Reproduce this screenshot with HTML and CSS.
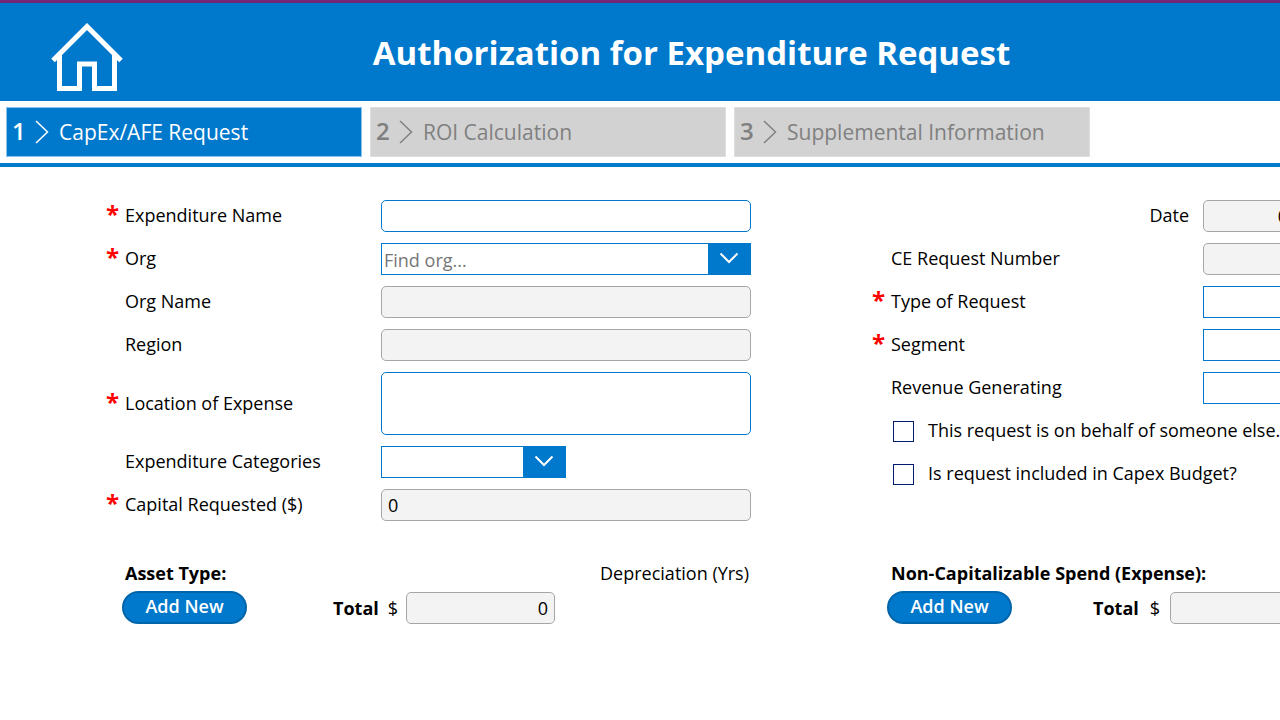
FILE: index.html
```html
<!DOCTYPE html>
<html lang="en">
<head>
<meta charset="utf-8">
<meta name="viewport" content="width=device-width, initial-scale=1">
<title>Authorization for Expenditure Request</title>
<link rel="stylesheet" href="styles.css">
</head>
<body>
<header class="banner">
  <a class="home" href="#" aria-label="Home">
    <svg width="72" height="70" viewBox="0 0 72 70" fill="none" stroke="#fff" stroke-width="5">
      <path d="M2 37.500 36 3.500 70 37.500"/>
      <path d="M8.500 31V65.500H28.500V41H43.500V65.500H63.500V31"/>
    </svg>
  </a>
  <h1 class="title">Authorization for Expenditure Request</h1>
</header>
<nav class="steps">
  <button class="step step-active" type="button" aria-current="step"><span class="step-number">1</span><svg class="step-arrow" width="14" height="24" viewBox="0 0 14 24"><path d="M1 1 12.500 12 1 23"/></svg><span>CapEx/AFE Request</span></button>
  <button class="step" type="button"><span class="step-number">2</span><svg class="step-arrow" width="14" height="24" viewBox="0 0 14 24"><path d="M1 1 12.500 12 1 23"/></svg><span>ROI Calculation</span></button>
  <button class="step" type="button"><span class="step-number">3</span><svg class="step-arrow" width="14" height="24" viewBox="0 0 14 24"><path d="M1 1 12.500 12 1 23"/></svg><span>Supplemental Information</span></button>
</nav>
<main>
<form class="form">
  <section class="fields">
    <span class="star">*</span><label class="label" for="name">Expenditure Name</label>
    <input class="input" id="name" type="text">

    <span class="star">*</span><label class="label" for="org">Org</label>
    <div class="dropdown">
      <select class="select" id="org"><option>Find org...</option></select>
      <span class="arrow"><svg width="20" height="12" viewBox="0 0 20 12"><path d="M1.500 1.500 10 10 18.500 1.500"/></svg></span>
    </div>

    <span></span><label class="label" for="org-name">Org Name</label>
    <input class="input" id="org-name" type="text" readonly>

    <span></span><label class="label" for="region">Region</label>
    <input class="input" id="region" type="text" readonly>

    <span class="star">*</span><label class="label" for="location">Location of Expense</label>
    <textarea class="input input-tall" id="location"></textarea>

    <span></span><label class="label" for="categories">Expenditure Categories</label>
    <div class="dropdown dropdown-short">
      <select class="select" id="categories"><option></option></select>
      <span class="arrow"><svg width="20" height="12" viewBox="0 0 20 12"><path d="M1.500 1.500 10 10 18.500 1.500"/></svg></span>
    </div>

    <span class="star">*</span><label class="label" for="capital">Capital Requested ($)</label>
    <input class="input" id="capital" type="text" value="0" readonly>
  </section>

  <section class="fields fields-right">
    <span></span><label class="label label-end" for="date">Date</label>
    <input class="input input-center" id="date" type="text" value="0" readonly>

    <span></span><label class="label" for="number">CE Request Number</label>
    <input class="input" id="number" type="text" readonly>

    <span class="star">*</span><label class="label" for="type">Type of Request</label>
    <div class="dropdown"><select class="select" id="type"><option></option></select></div>

    <span class="star">*</span><label class="label" for="segment">Segment</label>
    <div class="dropdown"><select class="select" id="segment"><option></option></select></div>

    <span></span><label class="label" for="revenue">Revenue Generating</label>
    <div class="dropdown"><select class="select" id="revenue"><option></option></select></div>

    <label class="check"><input class="box" type="checkbox"><span>This request is on behalf of someone else.</span></label>
    <label class="check"><input class="box" type="checkbox"><span>Is request included in Capex Budget?</span></label>
  </section>

  <section class="spend">
    <div class="spend-head"><h2 class="spend-title">Asset Type:</h2><span>Depreciation (Yrs)</span></div>
    <div class="spend-row">
      <button class="add" type="button">Add New</button>
      <label class="total" for="asset-total">Total</label>
      <span class="currency">$</span>
      <input class="input amount" id="asset-total" type="text" value="0" readonly>
    </div>
  </section>

  <section class="spend spend-right">
    <div class="spend-head"><h2 class="spend-title">Non-Capitalizable Spend (Expense):</h2></div>
    <div class="spend-row">
      <button class="add" type="button">Add New</button>
      <label class="total" for="expense-total">Total</label>
      <span class="currency">$</span>
      <input class="input amount" id="expense-total" type="text" readonly>
    </div>
  </section>
</form>
</main>
</body>
</html>
```
FILE: styles.css
```css
* { box-sizing: border-box; }

body {
  margin: 0;
  overflow-x: hidden;
  background: #fff;
  color: #000;
  font: 18px/24px "Open Sans", "Noto Sans", sans-serif;
}

button, input, select, textarea { font: inherit; color: inherit; margin: 0; }

.banner {
  display: flex;
  align-items: center;
  padding: 20px 20px 8px 51px;
  border-top: 3px solid #742774;
  background: #0078cb;
  color: #fff;
}
.home, .home svg { display: block; }
.title {
  flex: 1;
  margin: 0;
  padding-bottom: 10px;
  font-size: 33px;
  line-height: 40px;
  font-weight: 700;
  text-align: center;
}

.steps {
  display: flex;
  gap: 8px;
  padding: 6px;
  border-bottom: 4px solid #0078cb;
}
.step {
  display: flex;
  flex: 0 1 356px;
  align-items: center;
  height: 50px;
  padding: 0 6px 0 5px;
  border: 1px solid #dedede;
  background: #d2d2d2;
  color: #808080;
  font-size: 21px;
  line-height: 30px;
  white-space: nowrap;
}
.step-active { background: #0078cb; border-color: #8cc3e8; color: #fff; }
.step-number { width: 23px; padding-bottom: 2px; font-size: 24px; font-weight: 600; text-align: left; }
.step-arrow { margin-right: 10px; fill: none; stroke: currentColor; stroke-width: 1.5; }

.form {
  display: grid;
  grid-template-columns: minmax(645px, 1fr) minmax(491px, 1fr);
  column-gap: 121px;
  row-gap: 40px;
  padding: 33px 0 40px 106px;
}
.fields {
  display: grid;
  grid-template-columns: 19px 256px 1fr;
  row-gap: 11px;
  align-content: start;
  align-items: center;
}
.fields-right { grid-template-columns: 19px 312px 1fr; }
.label { padding-bottom: 2px; }
.label-end { padding-right: 14px; text-align: right; }
.star { padding-bottom: 4px; color: #f00; font-size: 24px; line-height: 24px; font-weight: 700; }

.input {
  width: 100%;
  height: 32px;
  padding: 0 6px;
  border: 1px solid #0078cb;
  border-radius: 5px;
  background: #fff;
}
.input-tall { display: block; height: 63px; resize: none; }
.input-center { text-align: center; }
.input:read-only { border-color: #a6a6a6; background: #f3f3f3; }

.dropdown {
  display: flex;
  height: 32px;
  border: 1px solid #0078cb;
  background: #fff;
}
.dropdown-short { width: 50%; }
.select {
  flex: 1;
  min-width: 0;
  padding: 2px 2px 0;
  border: 0;
  border-radius: 0;
  appearance: none;
  background: #fff;
  color: #767676;
}
.arrow {
  display: flex;
  align-items: center;
  justify-content: center;
  width: 42px;
  padding-bottom: 2px;
  background: #0078cb;
}
.arrow svg { fill: none; stroke: #fff; stroke-width: 2; }

.check {
  display: flex;
  grid-column: 1 / -1;
  align-items: center;
  gap: 14px;
  height: 32px;
  padding-left: 21px;
  white-space: nowrap;
}
.check span { padding-bottom: 2px; }
.box {
  width: 21px;
  height: 21px;
  border: 1px solid #001b70;
  appearance: none;
  background: #fff;
}
.box:checked { background: #0078cb; }

.spend-head {
  display: flex;
  justify-content: space-between;
  padding: 0 2px 0 19px;
}
.spend-title { margin: 0; font-size: 18px; line-height: 24px; font-weight: 700; }
.spend-row {
  display: flex;
  align-items: center;
  padding: 6px 0 0 16px;
}
.add {
  width: 125px;
  height: 33px;
  padding: 0 0 3px;
  border: 2px solid #0065ab;
  border-radius: 17px;
  background: #0078cb;
  color: #fff;
  font-weight: 600;
}
.total { margin-left: 86px; font-weight: 700; }
.currency { margin: 0 8px 0 9px; }
.amount { width: 149px; text-align: right; }
.spend-right .spend-row { padding-left: 15px; }
.spend-right .total { margin-left: 81px; }
.spend-right .currency { margin: 0 10px 0 11px; }
```
